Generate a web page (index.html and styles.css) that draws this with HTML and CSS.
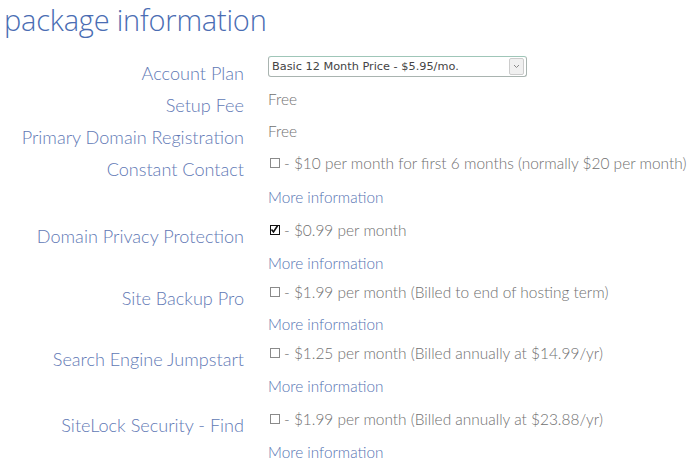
FILE: index.html
```html
<!DOCTYPE html>
<html>
<head>
<meta charset="utf-8">
<link rel="stylesheet" href="styles.css">
</head>
<body>
<h1 class="title">package information</h1>
<div class="form">
  <div class="label">Account Plan</div>
  <div class="value single">
    <div class="line">
      <div class="select"><span class="select-text">Basic 12 Month Price - $5.95/mo.</span><span class="select-btn"><svg width="7" height="5" viewBox="0 0 7 5"><path d="M1 1 L3.5 3.5 L6 1" fill="none" stroke="#888" stroke-width="1"/></svg></span></div>
    </div>
  </div>

  <div class="label">Setup Fee</div>
  <div class="value single"><div class="line">Free</div></div>

  <div class="label">Primary Domain Registration</div>
  <div class="value single"><div class="line">Free</div></div>

  <div class="label">Constant Contact</div>
  <div class="value">
    <div class="line"><span class="cb"></span> - $10 per month for first 6 months (normally $20 per month)</div>
    <div class="line info wide"><a class="more" href="#">More information</a></div>
  </div>

  <div class="label">Domain Privacy Protection</div>
  <div class="value tight">
    <div class="line"><span class="cb checked"><svg width="9" height="9" viewBox="0 0 9 9"><path d="M1.5 4.5 L3.5 7 L7.5 0.8" fill="none" stroke="#111" stroke-width="1.6"/></svg></span> - $0.99 per month</div>
    <div class="line info"><a class="more" href="#">More information</a></div>
  </div>

  <div class="label">Site Backup Pro</div>
  <div class="value tight">
    <div class="line"><span class="cb"></span> - $1.99 per month (Billed to end of hosting term)</div>
    <div class="line info plain"><a class="more" href="#">More information</a></div>
  </div>

  <div class="label">Search Engine Jumpstart</div>
  <div class="value">
    <div class="line"><span class="cb"></span> - $1.25 per month (Billed annually at $14.99/yr)</div>
    <div class="line info"><a class="more" href="#">More information</a></div>
  </div>

  <div class="label">SiteLock Security - Find</div>
  <div class="value">
    <div class="line"><span class="cb"></span> - $1.99 per month (Billed annually at $23.88/yr)</div>
    <div class="line info"><a class="more" href="#">More information</a></div>
  </div>
</div>
</body>
</html>
```
FILE: styles.css
```css
html, body {
  margin: 0;
  padding: 0;
  background: #ffffff;
}
body {
  font-family: Lato, "Open Sans", sans-serif;
  width: 700px;
  height: 471px;
  overflow: hidden;
}
.title {
  margin: 0 0 11px 4px;
  font-family: "Open Sans", sans-serif;
  font-weight: 300;
  font-size: 29px;
  line-height: 40px;
  color: #4a6db3;
  letter-spacing: -0.2px;
}
.form {
  display: grid;
  grid-template-columns: 244px 1fr;
  column-gap: 24px;
}
.label {
  text-align: right;
  font-size: 18.1px;
  line-height: 32px;
  padding-top: 5.5px;
  height: 26.5px;
  color: #5f79b5;
  font-weight: 300;
  white-space: nowrap;
}
.value {
  display: flex;
  flex-direction: column;
  margin-bottom: 1px;
}
.value.single {
  margin-bottom: 0;
}
.value.tight {
  margin-bottom: -3px;
}
.line {
  height: 32px;
  line-height: 32px;
  font-size: 15.45px;
  font-weight: 300;
  color: #707070;
  white-space: nowrap;
  display: flex;
  align-items: center;
}
.line.info {
  margin-top: 1px;
}
.line.info.wide {
  margin-top: 2px;
}
.line.info.plain {
  margin-top: 0;
}
.line .cb {
  margin-right: 4px;
}
.cb {
  display: inline-block;
  width: 8px;
  height: 8px;
  border: 1px solid #8a8a8a;
  background: #fff;
  position: relative;
  margin-left: 2px;
}
.cb.checked {
  border: 1px solid #111;
}
.cb.checked svg {
  position: absolute;
  left: -1px;
  top: -1px;
}
.more {
  color: #5573b2;
  text-decoration: none;
  font-size: 15.3px;
  font-weight: 300;
}
.select {
  width: 257px;
  height: 19px;
  border: 1px solid #a9b4b0;
  border-top-color: #9fc6b8;
  border-radius: 3px;
  display: flex;
  align-items: center;
  justify-content: space-between;
  font-family: "DejaVu Sans", Verdana, sans-serif;
  font-size: 11.3px;
  font-weight: 400;
  color: #444;
  background: #fff;
  margin-top: -1px;
}
.select-text {
  padding-left: 3px;
  line-height: 17px;
}
.select-btn {
  width: 13px;
  height: 15px;
  margin-right: 2px;
  border: 1px solid #ccc;
  border-radius: 2px;
  background: #f0f0f0;
  display: flex;
  align-items: center;
  justify-content: center;
}
```
